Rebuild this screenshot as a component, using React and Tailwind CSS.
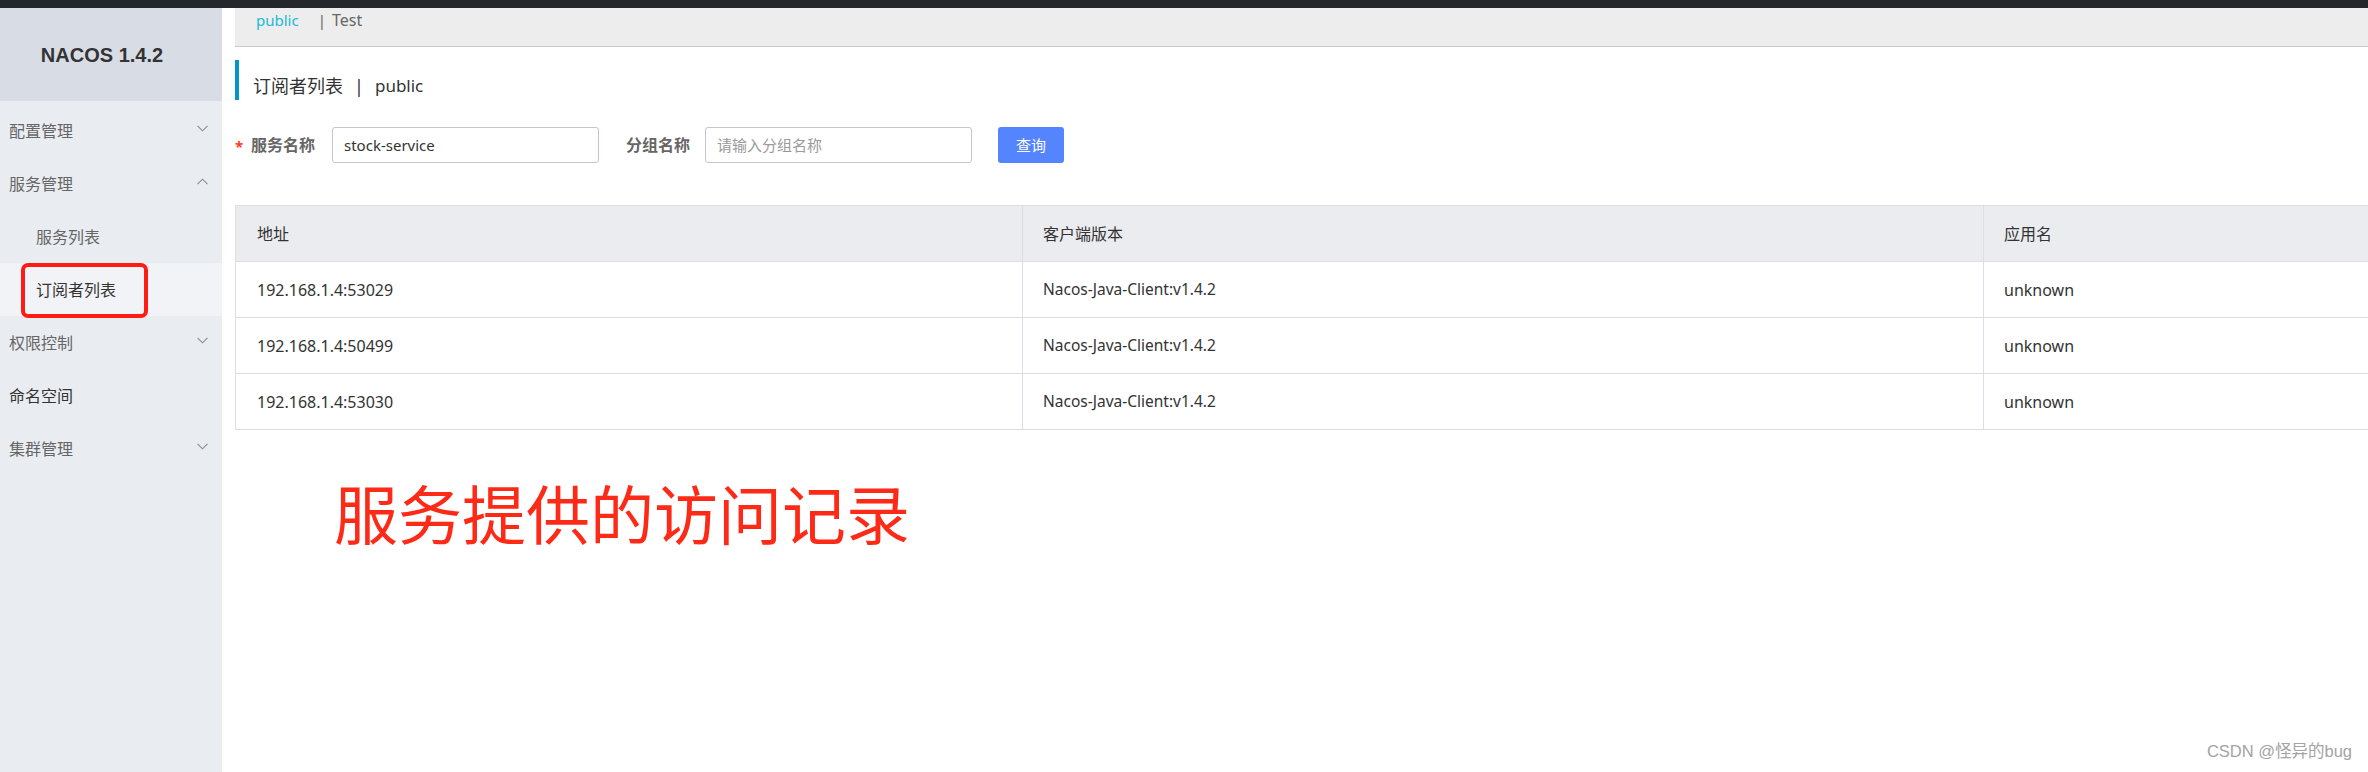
import React from "react";

const FONT = "font-['Noto_Sans','Noto_Sans_CJK_SC',sans-serif]";

const rows = [
  { addr: "192.168.1.4:53029", ver: "Nacos-Java-Client:v1.4.2", app: "unknown" },
  { addr: "192.168.1.4:50499", ver: "Nacos-Java-Client:v1.4.2", app: "unknown" },
  { addr: "192.168.1.4:53030", ver: "Nacos-Java-Client:v1.4.2", app: "unknown" },
];

export default function App() {
  return (
    <div className={`${FONT} relative w-full h-[772px] overflow-hidden bg-white flex flex-col`}>
      {/* dark strip on top */}
      <div className="h-[8px] bg-[#24282d] shrink-0" />

      <div className="flex flex-1 min-h-0">
        <Sidebar />

        {/* Main */}
        <div className="flex-1 min-w-0 pl-[13px] flex flex-col">
          {/* namespace bar */}
          <div className="h-[39px] bg-[#ededed] border-b border-[#c9c9c9] flex items-start pt-[2px] pl-[21px] text-[15px] leading-[20px]">
            <span className="text-[#1cb9d9]">public</span>
            <span className="ml-[19px] text-[#666]">|</span>
            <span className="ml-[6px] text-[#666] text-[16px]">Test</span>
          </div>

          {/* title */}
          <div className="mt-[13px] h-[40px] border-l-4 border-[#0596c9] flex items-center pl-[14px] pt-[12px] text-[18px] text-[#333]">
            <span>订阅者列表</span>
            <span className="mx-[11px]">|</span>
            <span className="text-[17px]">public</span>
          </div>

          {/* search form */}
          <div className="mt-[27px] flex items-center h-[36px] text-[15px]">
            <span className="text-[#ff3b1f] font-bold w-[16px] text-[15px] leading-none pt-[2px]">*</span>
            <span className="text-[#666] font-bold text-[16px]">服务名称</span>
            <div className="ml-[17px] w-[267px] h-[36px] border border-[#c4c6cf] rounded-[3px] flex items-center px-[11px] text-[#333]">
              stock-service
            </div>
            <span className="ml-[27px] text-[#666] font-bold text-[16px]">分组名称</span>
            <div className="ml-[15px] w-[267px] h-[36px] border border-[#c4c6cf] rounded-[3px] flex items-center px-[11px] text-[#9a9a9a]">
              请输入分组名称
            </div>
            <button className="ml-[26px] w-[66px] h-[36px] bg-[#5584ff] rounded-[3px] text-white text-[15px]">
              查询
            </button>
          </div>

          {/* table */}
          <div className="mt-[42px] w-full">
            <table className="w-full border-collapse text-[16px] text-[#333] table-fixed">
              <colgroup>
                <col className="w-[787px]" />
                <col className="w-[961px]" />
                <col />
              </colgroup>
              <thead>
                <tr className="h-[56px] bg-[#ebecf0] text-left">
                  <th className="font-normal pl-[21px] border-t border-l border-b border-[#dcdee3]">地址</th>
                  <th className="font-normal pl-[20px] border-t border-l border-b border-[#dcdee3]">客户端版本</th>
                  <th className="font-normal pl-[20px] border-t border-l border-b border-[#dcdee3]">应用名</th>
                </tr>
              </thead>
              <tbody>
                {rows.map((r) => (
                  <tr key={r.addr} className="h-[56px]">
                    <td className="pl-[21px] border-l border-b border-[#dcdee3]">{r.addr}</td>
                    <td className="pl-[20px] border-l border-b border-[#dcdee3] text-[15.5px]">{r.ver}</td>
                    <td className="pl-[20px] border-l border-b border-[#dcdee3]">{r.app}</td>
                  </tr>
                ))}
              </tbody>
            </table>
          </div>

          {/* annotation */}
          <div className="mt-[49px] ml-[99px] text-[64px] leading-none text-[#fe2a18] font-['Noto_Sans_CJK_SC',sans-serif]">
            服务提供的访问记录
          </div>
        </div>
      </div>

      {/* watermark */}
      <div className="absolute right-[16px] bottom-[8px] text-[16.5px] text-[#a3a3a3] font-['Liberation_Sans','Noto_Sans_CJK_SC',sans-serif]">
        CSDN @怪异的bug
      </div>
    </div>
  );
}

function Sidebar() {
  return (
    <div className="w-[222px] shrink-0 bg-[#e9ecf0] flex flex-col">
      <div className="h-[93px] bg-[#d8dde5] flex items-center justify-center pr-[18px]">
        <span className="font-['Liberation_Sans',sans-serif] font-bold text-[20px] text-[#333]">
          NACOS 1.4.2
        </span>
      </div>
      <div className="pt-[3px] text-[16px]">
        <MenuItem label="配置管理" chevron="down" />
        <MenuItem label="服务管理" chevron="up" />
        <SubItem label="服务列表" />
        <SubItem label="订阅者列表" active />
        <MenuItem label="权限控制" chevron="down" />
        <MenuItem label="命名空间" dark />
        <MenuItem label="集群管理" chevron="down" />
      </div>
    </div>
  );
}

function MenuItem({ label, chevron, dark }) {
  return (
    <div className="h-[53px] flex items-center justify-between pl-[9px] pr-[14px]">
      <span className={dark ? "text-[#333]" : "text-[#666]"}>{label}</span>
      {chevron && <Chevron dir={chevron} />}
    </div>
  );
}

function SubItem({ label, active }) {
  return (
    <div className={`relative h-[53px] flex items-center pl-[36px] ${active ? "bg-[#f2f3f7] text-[#333]" : "text-[#666]"}`}>
      <span>{label}</span>
      {active && (
        <div className="absolute left-[21px] top-[0px] w-[127px] h-[55px] border-[4px] border-[#ff1c14] rounded-[7px]" />
      )}
    </div>
  );
}

function Chevron({ dir }) {
  return (
    <svg width="11" height="7" viewBox="0 0 11 7" className="mt-[-4px]">
      {dir === "down" ? (
        <polyline points="0.5,0.8 5.5,5.8 10.5,0.8" fill="none" stroke="#878c96" strokeWidth="1.1" />
      ) : (
        <polyline points="0.5,6.2 5.5,1.2 10.5,6.2" fill="none" stroke="#878c96" strokeWidth="1.1" />
      )}
    </svg>
  );
}
